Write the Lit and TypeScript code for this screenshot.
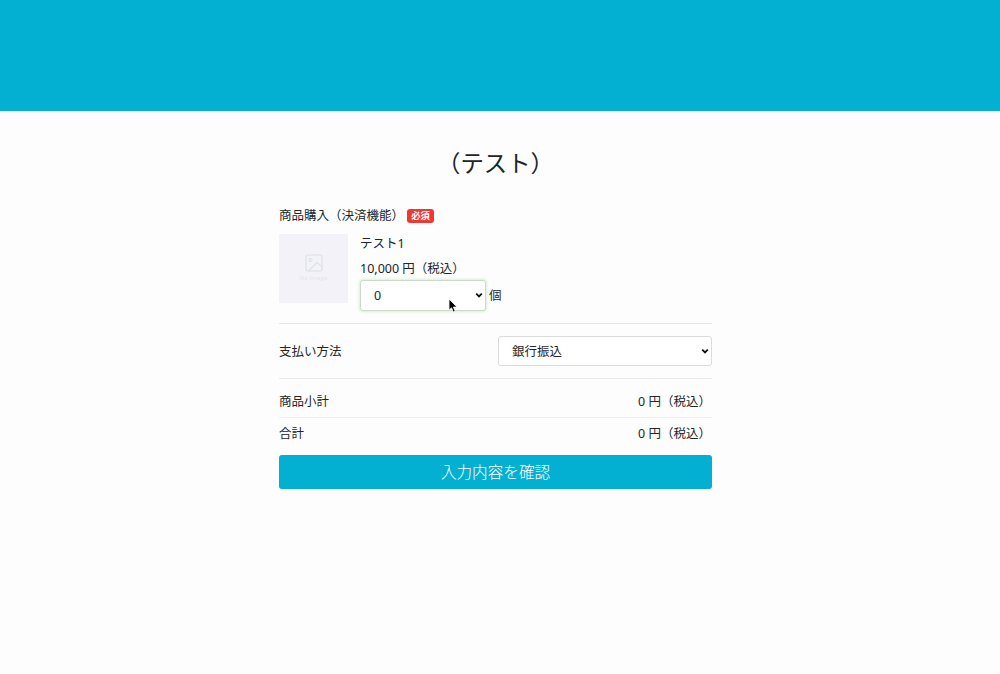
import { LitElement, html, css, svg } from 'lit';
import { customElement, property } from 'lit/decorators.js';

const chevron = svg`<path d="M1.2 1.7 4 4.4 6.8 1.7" fill="none" stroke="#111" stroke-width="1.8" />`;

@customElement('form-select')
export class FormSelect extends LitElement {
  @property({ type: Array }) options: string[] = [];
  @property({ type: Boolean }) active = false;

  static styles = css`
    :host {
      display: block;
      position: relative;
    }

    select {
      appearance: none;
      display: block;
      box-sizing: border-box;
      width: 100%;
      height: 30px;
      margin: 0;
      padding: 2px 20px 0 13px;
      border: 1px solid #d9dbdd;
      border-radius: 3px;
      background: #fff;
      color: #212529;
      font: inherit;
      outline: none;
    }

    select.active {
      height: 31px;
      padding-top: 0;
      border-color: #c9dcc9;
      box-shadow: 0 0 3px 1px #dbeedb;
    }

    svg {
      position: absolute;
      right: 3px;
      top: 12px;
      width: 8px;
      height: 6px;
      pointer-events: none;
    }
  `;

  render() {
    return html`
      <select class="${this.active ? 'active' : ''}">
        ${this.options.map((option) => html`<option>${option}</option>`)}
      </select>
      <svg viewBox="0 0 8 6">${chevron}</svg>
    `;
  }
}

@customElement('app-root')
export class AppRoot extends LitElement {
  @property({ type: Array }) totals = [
    { label: '商品小計', value: '0 円（税込）' },
    { label: '合計', value: '0 円（税込）' },
  ];

  static styles = css`
    :host {
      display: block;
      min-height: 674px;
      background: #fdfdfd;
      color: #212529;
      font-family: 'Noto Sans', 'Noto Sans CJK JP', sans-serif;
      font-size: 12.5px;
      line-height: 20px;
    }

    .header {
      height: 111px;
      background: #04b0d1;
    }

    .form {
      width: 433px;
      margin-left: 279px;
      padding-top: 34px;
    }

    h1 {
      margin: 0;
      font-size: 23.4px;
      font-weight: 400;
      line-height: 36px;
      text-align: center;
    }

    .label {
      display: flex;
      align-items: center;
      gap: 3px;
      margin-top: 25px;
    }

    .badge {
      width: 27px;
      height: 14px;
      border-radius: 3px;
      background: #ef3834;
      color: #fff;
      font-size: 9.3px;
      font-weight: 700;
      line-height: 14px;
      text-align: center;
    }

    .product {
      display: flex;
      gap: 12px;
      margin-top: 8px;
      padding-bottom: 12px;
      border-bottom: 1px solid #e3e5e7;
    }

    .thumb {
      display: flex;
      flex-direction: column;
      align-items: center;
      box-sizing: border-box;
      width: 69px;
      height: 69px;
      padding-top: 20px;
      background: #f3f2f9;
      color: #e5e5ec;
      font-size: 6px;
      line-height: 13px;
    }

    .thumb svg {
      width: 18px;
      height: 18px;
    }

    .details {
      display: flex;
      flex-direction: column;
      line-height: 25px;
      margin-top: -3px;
    }

    .quantity {
      display: flex;
      align-items: center;
      gap: 3px;
      position: relative;
      margin-top: -1px;
    }

    .quantity form-select {
      width: 126px;
    }

    .cursor {
      position: absolute;
      left: 88px;
      top: 18px;
      width: 10px;
      height: 16px;
    }

    .payment {
      display: flex;
      align-items: center;
      justify-content: space-between;
      padding: 12px 0;
      border-bottom: 1px solid #e9ebec;
    }

    .payment span {
      padding-top: 2px;
    }

    .payment form-select {
      width: 214px;
    }

    .totals {
      padding-top: 7px;
    }

    .total {
      display: flex;
      align-items: center;
      justify-content: space-between;
      height: 31px;
      padding-right: 1px;
    }

    .total + .total {
      border-top: 1px solid #eceeef;
    }

    button {
      display: block;
      width: 100%;
      height: 34px;
      margin-top: 6px;
      padding: 0;
      border: 0;
      border-radius: 3px;
      background: #04b0d1;
      color: #fff;
      font: inherit;
      font-size: 15.6px;
      font-weight: 300;
      line-height: 34px;
    }
  `;

  render() {
    return html`
      <div class="header"></div>
      <div class="form">
        <h1>（テスト）</h1>
        <div class="label">
          <span>商品購入（決済機能）</span>
          <span class="badge">必須</span>
        </div>

        <div class="product">
          <div class="thumb">
            <svg viewBox="0 0 18 18" fill="none" stroke="#e3e3ea" stroke-width="1.5">
              <rect x="1" y="1" width="16" height="16" rx="2" />
              <circle cx="5.5" cy="6" r="1.5" />
              <path d="M4 16.5 12 8.5 17 13" />
            </svg>
            <span>No Image</span>
          </div>
          <div class="details">
            <span>テスト1</span>
            <span>10,000 円（税込）</span>
            <div class="quantity">
              <form-select .options=${['0', '1', '2', '3']} active></form-select>
              <span>個</span>
              <svg class="cursor" viewBox="0 0 10 16">
                <path
                  d="M1 1V12.2L3.5 9.8 5.3 14 7.2 13.2 5.4 9.1H9Z"
                  fill="#000"
                  stroke="#fff"
                  stroke-width=".8"
                />
              </svg>
            </div>
          </div>
        </div>

        <div class="payment">
          <span>支払い方法</span>
          <form-select .options=${['銀行振込']}></form-select>
        </div>

        <div class="totals">
          ${this.totals.map(
            (row) => html`
              <div class="total">
                <span>${row.label}</span>
                <span>${row.value}</span>
              </div>
            `
          )}
        </div>

        <button type="button">入力内容を確認</button>
      </div>
    `;
  }
}

declare global {
  interface HTMLElementTagNameMap {
    'app-root': AppRoot;
    'form-select': FormSelect;
  }
}
